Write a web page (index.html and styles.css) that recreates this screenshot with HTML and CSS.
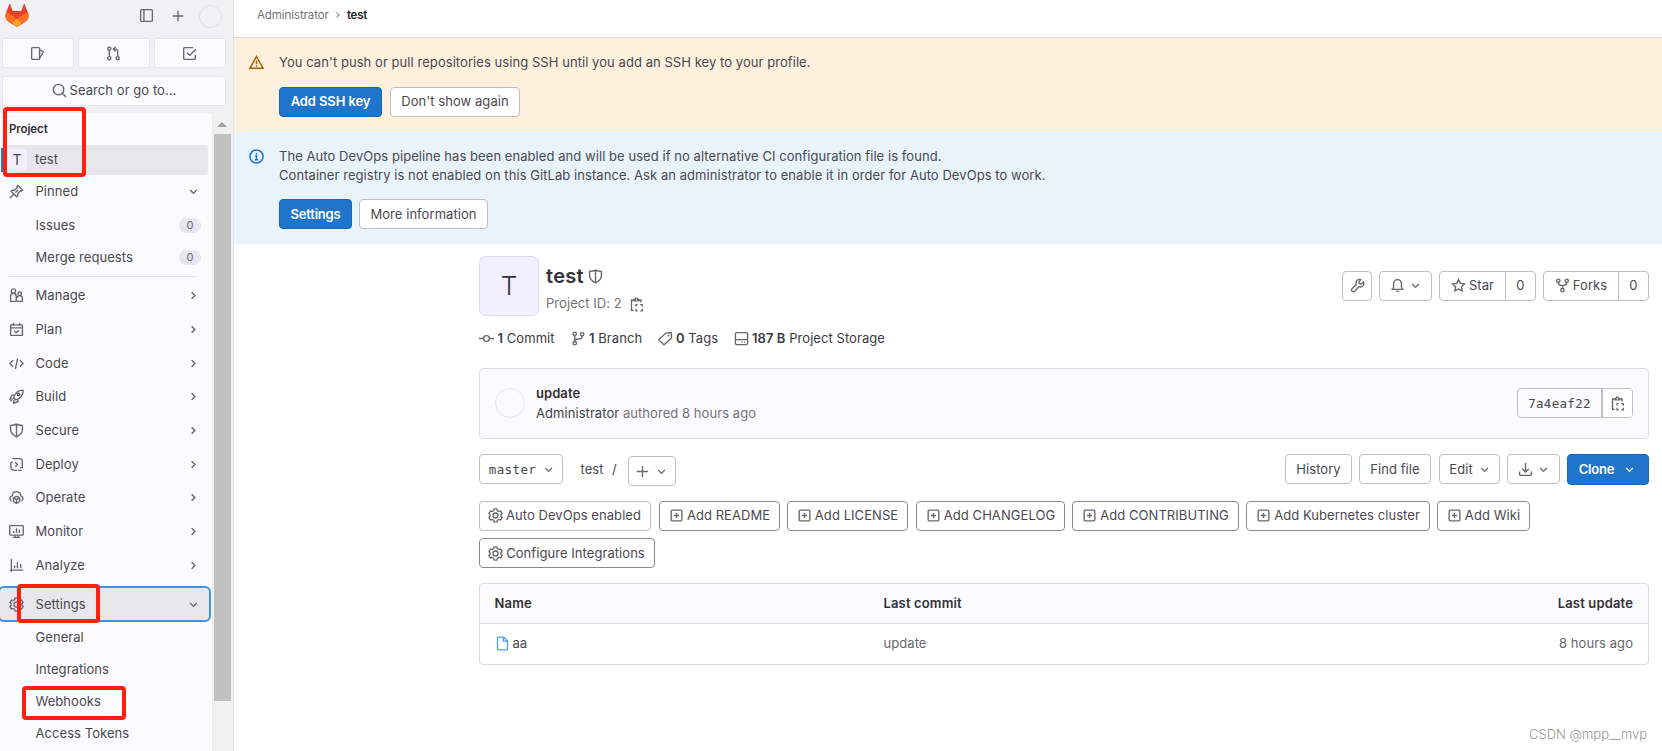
FILE: index.html
```html
<!DOCTYPE html>
<html lang="en">
<head>
<meta charset="utf-8">
<title>Administrator / test</title>
<link rel="stylesheet" href="styles.css">
</head>
<body>
<svg class="sprite" aria-hidden="true">
  <symbol id="down" viewBox="0 0 16 16"><path d="M4.5 6.5 8 10l3.5-3.500"/></symbol>
  <symbol id="right" viewBox="0 0 16 16"><path d="M6 4.500 9.500 8 6 11.500"/></symbol>
  <symbol id="sidebar" viewBox="0 0 16 16"><rect x="1.750" y="1.750" width="12.500" height="12.500" rx="1"/><path d="M5.250 2v12"/></symbol>
  <symbol id="plus" viewBox="0 0 16 16"><path d="M8 2v12M2 8h12"/></symbol>
  <symbol id="issues" viewBox="0 0 16 16"><rect x="1.750" y="1.750" width="8.500" height="12.500" rx="1"/><path d="m10.500 4.200 3.700 1.900-3.700 6.700"/></symbol>
  <symbol id="merge" viewBox="0 0 16 16"><circle cx="3.500" cy="3" r="1.700"/><circle cx="3.500" cy="13" r="1.700"/><circle cx="12.500" cy="13" r="1.700"/><path d="M3.500 4.700v6.600M12.500 11.300V5.500q0-2.200-2.200-2.200H8.500M10.300.8 7.800 3.300l2.500 2.500"/></symbol>
  <symbol id="todo" viewBox="0 0 16 16"><path d="M14.200 9.500v3.700q0 1-1 1H2.800q-1 0-1-1V2.800q0-1 1-1h9M5.500 7.200 8.300 10l6.500-6.500"/></symbol>
  <symbol id="search" viewBox="0 0 16 16"><circle cx="7" cy="7" r="5.600"/><path d="m11 11 4 4"/></symbol>
  <symbol id="pin" viewBox="0 0 16 16"><path d="m1 15 4.500-4.500M9.500 1.500l5 5-1.300 1.100-1-.3-3 3 .3 2.200-1.300 1.200-6-6 1.300-1.200 2.200.3 3-3-.3-1zM9.800 6.200 6.900 9.100"/></symbol>
  <symbol id="people" viewBox="0 0 16 16"><circle cx="4.700" cy="3.200" r="2.300"/><path d="M7.500 14.200H1.700V8.700q0-3 3-3t3 3v5.500zM8.500 14.200h5.700v-3.500q0-2.500-2.700-2.500t-2.800 2.500"/><circle cx="11.500" cy="6.200" r="1.900"/></symbol>
  <symbol id="calendar" viewBox="0 0 16 16"><rect x="1.700" y="3" width="12.600" height="11.300" rx=".5"/><path d="M1.700 6.300h12.600M4.700.8V4M11.300.8V4M5.500 9.300l2.200 2 3-2.300"/></symbol>
  <symbol id="code" viewBox="0 0 16 16"><path d="M4.300 4.500.9 8l3.400 3.500M11.700 4.500 15.100 8l-3.400 3.500M9.200 2.500 6.800 13.800"/></symbol>
  <symbol id="rocket" viewBox="0 0 16 16"><path d="M5 9.500C6 5 9.500 1.300 15 1.200c0 5-3 9-7.700 10.300zM5.500 6.500H3.200L1 10.800l3.500-.3M9.500 10.800v2.700L5 15.200l.3-3.700M1.200 11.500 2.800 13"/><circle cx="10.200" cy="5.800" r="1.300"/></symbol>
  <symbol id="shield" viewBox="0 0 16 16"><path d="M8 1.300q3 1.300 6.300 1.300v4.700q0 4.500-6.300 7.400-6.300-2.900-6.300-7.400V2.600Q5 2.600 8 1.300zM8 1.500v13"/></symbol>
  <symbol id="deploy" viewBox="0 0 16 16"><path d="M2 5.500V10q0 4.200 4.300 4.200h2.200M3.500 1.800h7.700q3 0 3 3v6.500h-2.500M2 5.500h2.200M6.700 5.700 9 8l-2.300 2.300M9.500 14.200h4"/></symbol>
  <symbol id="operate" viewBox="0 0 16 16"><path d="M2.800 11.700C.3 10.500.3 7 3.500 6.300 4 .3 12 .3 12.500 6.300c3.200.7 3.200 4.200.7 5.400M8 6.700l3.300 1.700v4L8 14.300l-3.300-1.900v-4zM4.900 8.700 8 10.300l3.100-1.600M8 10.300v3.700"/></symbol>
  <symbol id="monitor" viewBox="0 0 16 16"><rect x=".8" y="1.800" width="14.400" height="10" rx=".5"/><path d="M4 14.300h8M6.500 12v2M9.500 12v2M5 7.500V9.500M8 4.500v5M11 6v3.500"/></symbol>
  <symbol id="chart" viewBox="0 0 16 16"><path d="M2.500 1v14M.8 13h14.400M6 8v3M9 4.500V11M12.500 6.500V11"/></symbol>
  <symbol id="gear" viewBox="0 0 16 16"><path d="M6.600 1h2.800l.5 1.800 1.700 1 1.800-.5L15 5.800 13.800 7.200v1.600L15 10.200l-1.600 2.500-1.800-.5-1.700 1L9.400 15H6.600l-.5-1.800-1.700-1-1.800.5L1 10.200l1.200-1.400V7.200L1 5.800l1.600-2.500 1.800.5 1.700-1z"/><circle cx="8" cy="8" r="2.700"/></symbol>
  <symbol id="warning" viewBox="0 0 16 16"><path d="M8 1.600 15 14.200H1zM8 5.800v4M8 11v1.500"/></symbol>
  <symbol id="info" viewBox="0 0 16 16"><circle cx="8" cy="8" r="7"/><path d="M6.500 7.300H8v4M6.200 11.500h3.600M8 4.200v1.600"/></symbol>
  <symbol id="copy" viewBox="0 0 16 16"><path d="M5 14.200H2.700V3.200H5M10.500 3.200h2.300v2.600M5.500 4.200V2.500h1.200q.2-1.500 1.200-1.500t1.300 1.500h1.200v1.700zM7.500 10V8.200h1.700M12 8.200h2.200V10M14.200 12.500v2.300H12M9.200 14.800H7.500v-2.300"/></symbol>
  <symbol id="commit" viewBox="0 0 16 16"><circle cx="8" cy="8" r="3.100"/><path d="M0 8h4.800M11.200 8H16"/></symbol>
  <symbol id="branch" viewBox="0 0 16 16"><circle cx="4" cy="3" r="1.800"/><circle cx="12" cy="3.500" r="1.800"/><circle cx="4" cy="13" r="1.800"/><path d="M4 4.800v6.400M12 5.300q0 3.200-4 3.200-4 0-4 2.500"/></symbol>
  <symbol id="tag" viewBox="0 0 16 16"><path d="M8.500 2.200 14 1.700l.5 5.500-7.300 6.900q-.8.700-1.500 0L1.500 10q-.7-.8 0-1.500z"/><circle cx="11.200" cy="4.800" r=".4"/></symbol>
  <symbol id="disk" viewBox="0 0 16 16"><rect x="1.500" y="1.700" width="13" height="12.800" rx="1.500"/><path d="M1.500 9.200h13M8 12h1M11 12h1"/></symbol>
  <symbol id="wrench" viewBox="0 0 16 16"><path d="M11.500 1.700 9.500 4l.5 2 2 .5 2.400-2.300q1 3-1 4.600-1.800 1.400-4 .5L5 14.200q-1.300 1.100-2.600 0-1.300-1.300-.3-2.700L6.800 7q-1-2.300.5-4.200 1.700-1.900 4.200-1.100z"/></symbol>
  <symbol id="bell" viewBox="0 0 16 16"><path d="M1.500 12.200h13M3.200 12l.6-2.500V6Q4.200 1.800 8 1.800T12.200 6v3.500l.6 2.500M6.700 14.300h2.600"/></symbol>
  <symbol id="star" viewBox="0 0 16 16"><path d="m8 1.700 1.900 4 4.500.6-3.300 3.100.8 4.400L8 11.700l-3.900 2.100.8-4.400L1.600 6.300l4.500-.6z"/></symbol>
  <symbol id="fork" viewBox="0 0 16 16"><circle cx="3.500" cy="3" r="1.800"/><circle cx="12.500" cy="3" r="1.800"/><circle cx="8" cy="13" r="1.800"/><path d="M3.500 4.800q0 3 3 3h3q3 0 3-3M8 7.800v3.400"/></symbol>
  <symbol id="download" viewBox="0 0 16 16"><path d="M8 1v9.500M4.500 7.200 8 10.700l3.500-3.500M1.700 10v3.200q0 1 1 1h10.600q1 0 1-1V10"/></symbol>
  <symbol id="addbox" viewBox="0 0 16 16"><rect x="2.300" y="2.300" width="11.400" height="11.400" rx="1.200"/><path d="M8 5.200v5.600M5.200 8h5.600"/></symbol>
  <symbol id="file" viewBox="0 0 16 16"><path d="M9.300 1.200H3.700q-1 0-1 1v11.600q0 1 1 1h8.600q1 0 1-1V5.200zM9 1.500v4h4"/></symbol>
</svg>

<div class="app">
  <aside class="side">
    <div class="side-top">
      <svg class="logo" viewBox="0 0 24 23"><path fill="#e24329" d="M4.300.3 1.100 8.600Q-1.200 14.400 4 18l8 5 8-5q5.200-3.600 2.900-9.400L19.700.3q-.5-.6-1 0L16.300 7H7.700L5.300.3q-.5-.6-1 0z"/><path fill="#fc6d26" d="M22.900 8.600q-3 .6-5.500 2.300L12 15l-5.400-4.100Q4 9.200 1.100 8.600-1.200 14.400 4 18l8 5 8-5q5.200-3.600 2.900-9.400z"/><path fill="#fca326" d="m7.200 18.700 4.800-3.700 4.800 3.700L12 23z"/></svg>
      <div class="top-icons"><svg class="i"><use href="#sidebar"/></svg><svg class="i add"><use href="#plus"/></svg><span class="user"></span></div>
    </div>
    <div class="shortcuts"><span><svg class="i"><use href="#issues"/></svg></span><span><svg class="i"><use href="#merge"/></svg></span><span><svg class="i"><use href="#todo"/></svg></span></div>
    <div class="search"><svg class="i"><use href="#search"/></svg><span>Search or go to...</span></div>
    <div class="side-body">
      <nav class="nav">
        <div class="heading">Project</div>
        <div class="row current"><span class="letter">T</span><span>test</span></div>
        <div class="row pinned"><svg class="i"><use href="#pin"/></svg><span>Pinned</span><svg class="i chev"><use href="#down"/></svg></div>
        <div class="sub"><span>Issues</span><b class="count">0</b></div>
        <div class="sub"><span>Merge requests</span><b class="count">0</b></div>
        <div class="rule"></div>
        <div class="row"><svg class="i"><use href="#people"/></svg><span>Manage</span><svg class="i chev"><use href="#right"/></svg></div>
        <div class="row"><svg class="i"><use href="#calendar"/></svg><span>Plan</span><svg class="i chev"><use href="#right"/></svg></div>
        <div class="row"><svg class="i"><use href="#code"/></svg><span>Code</span><svg class="i chev"><use href="#right"/></svg></div>
        <div class="row"><svg class="i"><use href="#rocket"/></svg><span>Build</span><svg class="i chev"><use href="#right"/></svg></div>
        <div class="row"><svg class="i"><use href="#shield"/></svg><span>Secure</span><svg class="i chev"><use href="#right"/></svg></div>
        <div class="row"><svg class="i"><use href="#deploy"/></svg><span>Deploy</span><svg class="i chev"><use href="#right"/></svg></div>
        <div class="row"><svg class="i"><use href="#operate"/></svg><span>Operate</span><svg class="i chev"><use href="#right"/></svg></div>
        <div class="row"><svg class="i"><use href="#monitor"/></svg><span>Monitor</span><svg class="i chev"><use href="#right"/></svg></div>
        <div class="row"><svg class="i"><use href="#chart"/></svg><span>Analyze</span><svg class="i chev"><use href="#right"/></svg></div>
        <div class="row focused"><svg class="i"><use href="#gear"/></svg><span>Settings</span><svg class="i chev"><use href="#down"/></svg></div>
        <div class="sub"><span>General</span></div>
        <div class="sub"><span>Integrations</span></div>
        <div class="sub"><span>Webhooks</span></div>
        <div class="sub"><span>Access Tokens</span></div>
      </nav>
      <div class="scroll"><i class="arrow"></i><i class="thumb"></i></div>
    </div>
  </aside>

  <main class="main">
    <div class="crumbs"><span>Administrator</span><svg class="i"><use href="#right"/></svg><b>test</b></div>
    <section class="alert warn">
      <svg class="i"><use href="#warning"/></svg>
      <div><p>You can't push or pull repositories using SSH until you add an SSH key to your profile.</p>
      <div class="actions"><a class="btn up primary w-ssh">Add SSH key</a><a class="btn up w-dont">Don't show again</a></div></div>
    </section>
    <section class="alert note">
      <svg class="i"><use href="#info"/></svg>
      <div><p>The Auto DevOps pipeline has been enabled and will be used if no alternative CI configuration file is found.<br>Container registry is not enabled on this GitLab instance. Ask an administrator to enable it in order for Auto DevOps to work.</p>
      <div class="actions"><a class="btn primary w-set">Settings</a><a class="btn w-more">More information</a></div></div>
    </section>

    <div class="content">
      <header class="project">
        <div class="avatar">T</div>
        <div class="title"><h1><span>test</span><svg class="i"><use href="#shield"/></svg></h1><p><span>Project ID: 2</span><svg class="i"><use href="#copy"/></svg></p></div>
        <div class="tools">
          <a class="btn up w-wrench"><svg class="i"><use href="#wrench"/></svg></a>
          <a class="btn up w-bell"><svg class="i"><use href="#bell"/></svg><svg class="i"><use href="#down"/></svg></a>
          <span class="group up w-star"><a><svg class="i"><use href="#star"/></svg>Star</a><a class="n">0</a></span>
          <span class="group up w-fork"><a><svg class="i"><use href="#fork"/></svg>Forks</a><a class="n">0</a></span>
        </div>
      </header>
      <div class="stats">
        <span class="s1"><svg class="i"><use href="#commit"/></svg><b>1</b> Commit</span>
        <span class="s2"><svg class="i"><use href="#branch"/></svg><b>1</b> Branch</span>
        <span class="s3"><svg class="i"><use href="#tag"/></svg><b>0</b> Tags</span>
        <span><svg class="i"><use href="#disk"/></svg><b>187 B</b> Project Storage</span>
      </div>
      <div class="last-commit">
        <span class="author"></span>
        <div class="msg"><b>update</b><p><span>Administrator</span> authored 8 hours ago</p></div>
        <span class="group hash"><a>7a4eaf22</a><a class="n"><svg class="i"><use href="#copy"/></svg></a></span>
      </div>
      <div class="tree">
        <a class="btn mono w-master">master<svg class="i"><use href="#down"/></svg></a>
        <span class="path">test</span><span class="slash">/</span>
        <a class="btn w-plus"><svg class="i"><use href="#plus"/></svg><svg class="i"><use href="#down"/></svg></a>
        <div class="tree-actions">
          <a class="btn w-hist">History</a><a class="btn w-find">Find file</a><a class="btn w-edit">Edit<svg class="i"><use href="#down"/></svg></a><a class="btn w-down"><svg class="i"><use href="#download"/></svg><svg class="i"><use href="#down"/></svg></a><a class="btn primary w-clone">Clone<svg class="i"><use href="#down"/></svg></a>
        </div>
      </div>
      <div class="quick">
        <a class="btn up w-auto"><svg class="i"><use href="#gear"/></svg>Auto DevOps enabled</a>
        <a class="btn up dark w-readme"><svg class="i"><use href="#addbox"/></svg>Add README</a>
        <a class="btn up dark w-license"><svg class="i"><use href="#addbox"/></svg>Add LICENSE</a>
        <a class="btn up dark w-change"><svg class="i"><use href="#addbox"/></svg>Add CHANGELOG</a>
        <a class="btn up dark w-contrib"><svg class="i"><use href="#addbox"/></svg>Add CONTRIBUTING</a>
        <a class="btn up dark w-kube"><svg class="i"><use href="#addbox"/></svg>Add Kubernetes cluster</a>
        <a class="btn up dark w-wiki"><svg class="i"><use href="#addbox"/></svg>Add Wiki</a>
        <a class="btn dark w-conf"><svg class="i"><use href="#gear"/></svg>Configure Integrations</a>
      </div>
      <div class="files">
        <div class="tr th"><span>Name</span><span>Last commit</span><span>Last update</span></div>
        <div class="tr"><span class="name"><svg class="i"><use href="#file"/></svg>aa</span><span>update</span><span>8 hours ago</span></div>
      </div>
    </div>
  </main>
</div>
<div class="mark mark-project"></div>
<div class="mark mark-settings"></div>
<div class="mark mark-webhooks"></div>
<div class="watermark">CSDN @mpp__mvp</div>
</body>
</html>
```
FILE: styles.css
```css
* { box-sizing: border-box; }
body { margin: 0; height: 751px; overflow: hidden; background: #fff; color: #4a494f; font: 13px/19px Inter, "Liberation Sans", sans-serif; letter-spacing: .06px; }
p, h1 { margin: 0; }
.sprite { position: absolute; width: 0; height: 0; }
.i { flex: none; width: 15px; height: 15px; fill: none; stroke: #68676d; stroke-width: 1.45; }
.app { display: flex; height: 751px; }

/* Sidebar */
.side { width: 234px; height: 751px; flex: none; display: flex; flex-direction: column; background: #f1f1f4; border-right: 1px solid #e4e4e8; }
.side-top { display: flex; justify-content: space-between; height: 38px; padding: 4px 11px 0 5px; }
.logo { width: 24px; height: 23px; }
.top-icons { display: flex; align-items: center; height: 24px; }
.top-icons .i { margin-bottom: 1px; }
.top-icons .add { width: 14px; height: 14px; margin: 0 14px 1px 17px; }
.user { width: 23px; height: 23px; border: 1px solid #dfdfe3; border-radius: 50%; }
.shortcuts { display: flex; gap: 4px; padding: 0 7px 0 2px; }
.shortcuts span, .search { display: flex; align-items: center; justify-content: center; background: #fbfafd; border: 1px solid #e6e6ea; border-radius: 3px; }
.shortcuts span { flex: 1; height: 30px; padding-right: 2px; }
.search { height: 30px; margin: 8px 7px 7px 2px; padding-bottom: 2px; gap: 3px; }
.side-body { display: flex; height: 638px; overflow: hidden; }
.nav { width: 212px; background: #fbfafd; }
.heading { height: 32px; padding: 7px 9px 0; font-size: 11.500px; font-weight: 600; letter-spacing: -.1px; color: #333238; }
.row { display: flex; align-items: center; height: 33.700px; padding: 0 11px 0 9px; }
.row > span:not(.letter) { margin-left: 11.500px; }
.row .chev { margin-left: auto; stroke-width: 1.500; }
.row.current { height: 30px; margin: 0 4px 0 1px; padding: 0 0 1px; background: #e7e7eb; border-radius: 3px; border-left: 3px solid #1f75cb; }
.row.current { border-image: linear-gradient(transparent 4px, #1f75cb 4px, #1f75cb 26px, transparent 26px) 1; }
.letter { width: 20px; height: 21px; margin-left: 3px; text-align: center; line-height: 21px; font-size: 14px; background: #f1f0ff; border-radius: 3px; }
.row.current > span:last-child { margin-left: 8px; }
.pinned { height: 34px; padding-bottom: 2px; }
.sub { display: flex; align-items: center; justify-content: space-between; height: 32px; padding: 0 11px 0 35.500px; }
.count { width: 22px; height: 15px; border-radius: 8px; background: #e7e7eb; color: #68676d; font-size: 11px; line-height: 15px; font-weight: 400; text-align: center; margin-top: 1px; }
.rule { height: 1px; margin: 3px 15px 2px 9px; background: #e4e4e8; }
.row.focused { height: 36px; margin: 4px 1px -1px -2px; padding-left: 9px; background: #e7e7eb; background-clip: padding-box; border: 2px solid #428fdc; border-radius: 6px; padding-right: 8px; }
.scroll { width: 21px; padding-top: 9px; background: #f1f1f1; border-left: 1px solid #ececee; }
.arrow { display: block; width: 0; height: 0; margin-left: 4px; border: 5px solid transparent; border-top: 0; border-bottom-color: #a0a0a0; }
.thumb { display: block; width: 17px; height: 567px; margin: 7px 0 0 1px; background: #c1c1c1; }

/* Main */
.main { flex: 1; min-width: 0; }
.crumbs { display: flex; align-items: center; height: 38px; padding: 0 0 7px 23px; border-bottom: 1px solid #dcdcde; font-size: 11.500px; letter-spacing: -.08px; color: #737278; }
.crumbs b { color: #28272d; font-weight: 600; letter-spacing: -.2px; }
.crumbs .i { width: 12px; height: 12px; margin: 0 3px 0 3px; stroke: #89888d; }
.alert { display: flex; padding: 14px 15px 0; }
.alert > .i { margin: 2px 15px 0 0; stroke-width: 1.600; }
.warn { height: 94px; padding-top: 15px; background: #fdf1dd; }
.warn .i { stroke: #ab6100; }
.note { height: 112px; background: #e9f3fc; }
.note > .i { stroke: #1f75cb; margin-top: 3px; }
.note p { padding-top: 1px; }
.actions { display: flex; gap: 8px; margin-top: 15px; }
.note .actions { margin-top: 14px; gap: 7px; }
.btn, .group { display: flex; align-items: center; justify-content: center; height: 30px; border: 1px solid #bfbfc3; border-radius: 4px; background: #fff; white-space: nowrap; }
.btn.up, .group.up a { padding-bottom: 2px; }
.primary { background: #1f75cb; border-color: #1068bf; color: #fff; font-weight: 600; letter-spacing: -.2px; }
.primary .i { stroke: #fff; }
.dark { border-color: #89888d; }
.group a { display: flex; align-items: center; justify-content: center; height: 28px; flex: 1; }
.group .n { flex: none; width: 30px; border-left: 1px solid #bfbfc3; }
.w-ssh { width: 103px; letter-spacing: -.1px; } .w-dont { width: 130px; } .w-set { width: 73px; } .w-more { width: 129px; }

.content { margin: 12px 13px 0 245px; }
.project { display: flex; height: 60px; }
.avatar { width: 60px; height: 60px; border: 1px solid #dedaf0; border-radius: 7px; background: #f1f0ff; text-align: center; font-size: 26px; font-weight: 300; line-height: 58px; color: #333238; }
.title { margin-left: 7px; }
.title h1 { display: flex; align-items: center; height: 40px; font-size: 20px; font-weight: 600; letter-spacing: .3px; color: #333238; }
.title h1 .i { margin: 1px 0 0 4px; }
.title p { display: flex; align-items: center; margin-top: -2px; color: #737278; }
.title p .i { margin: 1px 0 0 7px; }
.tools { display: flex; gap: 7px; margin: 15px 0 0 auto; }
.w-wrench { width: 30px; }
.w-bell { width: 53px; gap: 3px; padding-left: 1px; }
.w-star { width: 97px; } .w-fork { width: 106px; }
.group .i { margin-right: 3px; }
.stats { display: flex; align-items: center; height: 20px; margin-top: 12px; color: #3c3b41; }
.stats span { display: flex; align-items: center; white-space: pre; }
.stats b { font-weight: 600; }
.stats .i { margin-right: 3.500px; }
.s1 { width: 91.500px; } .s2 { width: 87px; } .s3 { width: 76px; }
.last-commit { display: flex; align-items: center; height: 71px; margin-top: 20px; padding: 0 15px 1px; border: 1px solid #dcdcde; border-radius: 4px; background: #fbfafd; }
.author { width: 30px; height: 30px; border: 1px solid #e4e4e8; border-radius: 50%; }
.msg { margin: -1px 0 0 11px; line-height: 20px; color: #737278; }
.msg b { font-weight: 600; color: #333238; }
.msg span { color: #434248; }
.hash { width: 116px; margin-left: auto; background: transparent; font-family: "DejaVu Sans Mono", monospace; font-size: 12.500px; letter-spacing: .3px; }
.hash .n { background: #fff; border-left-width: 2px; width: 31px; border-radius: 0 3px 3px 0; }
.hash .i { margin: 0; }
.tree { display: flex; height: 31px; margin-top: 15px; }
.mono { font-family: "DejaVu Sans Mono", monospace; font-size: 12.500px; letter-spacing: .4px; }
.w-master { width: 84px; gap: 5px; padding-left: 3px; }
.path { margin: 6px 0 0 17.500px; width: 31.500px; } .slash { margin-top: 6px; width: 16px; }
.w-plus { width: 48px; margin-top: 2px; gap: 4px; }
.tree-actions { display: flex; margin-left: auto; }
.w-hist { width: 67px; margin-right: 7px; } .w-find { width: 72px; margin-right: 8px; } .w-edit { width: 61px; gap: 4px; padding-left: 2px; margin-right: 7px; } .w-down { width: 53px; gap: 3px; padding-left: 2px; margin-right: 7px; } .w-clone { width: 82px; height: 31px; gap: 8px; }
.quick { display: flex; flex-wrap: wrap; margin-top: 16px; row-gap: 7px; }
.quick .i { margin-right: 3px; }
.quick .w-auto, .quick .w-conf { padding-right: 1px; }
.w-auto { width: 172px; margin-right: 8px; } .w-readme { width: 121px; margin-right: 7px; } .w-license { width: 121px; margin-right: 8px; } .w-change { width: 149px; margin-right: 7px; } .w-contrib { width: 167px; margin-right: 7px; } .w-kube { width: 184px; margin-right: 7px; } .w-wiki { width: 93px; margin-right: 60px; } .w-conf { width: 176px; }
.files { margin-top: 15px; border: 1px solid #dcdcde; border-radius: 4px; overflow: hidden; }
.tr { display: grid; grid-template-columns: 389px 1fr auto; align-items: center; height: 40px; padding: 0 15px 2px 14.500px; color: #68676d; }
.th { height: 40px; padding-bottom: 0; border-bottom: 1px solid #dcdcde; background: #fbfafd; color: #333238; font-weight: 600; letter-spacing: .15px; }
.name { display: flex; align-items: center; color: #4a494f; }
.name .i { margin-right: 3px; stroke: #4ca0f0; }

/* Annotations over the page */
.mark { position: absolute; border: 4px solid #ff1e10; border-radius: 4px; }
.mark-project { left: 3px; top: 107px; width: 83px; height: 70px; }
.mark-settings { left: 17px; top: 584px; width: 83px; height: 39px; }
.mark-webhooks { left: 22px; top: 686px; width: 104px; height: 34px; }
.watermark { position: absolute; right: 15px; top: 725px; color: #96969a; font-size: 13px; font-weight: 300; letter-spacing: -.04px; }
```
